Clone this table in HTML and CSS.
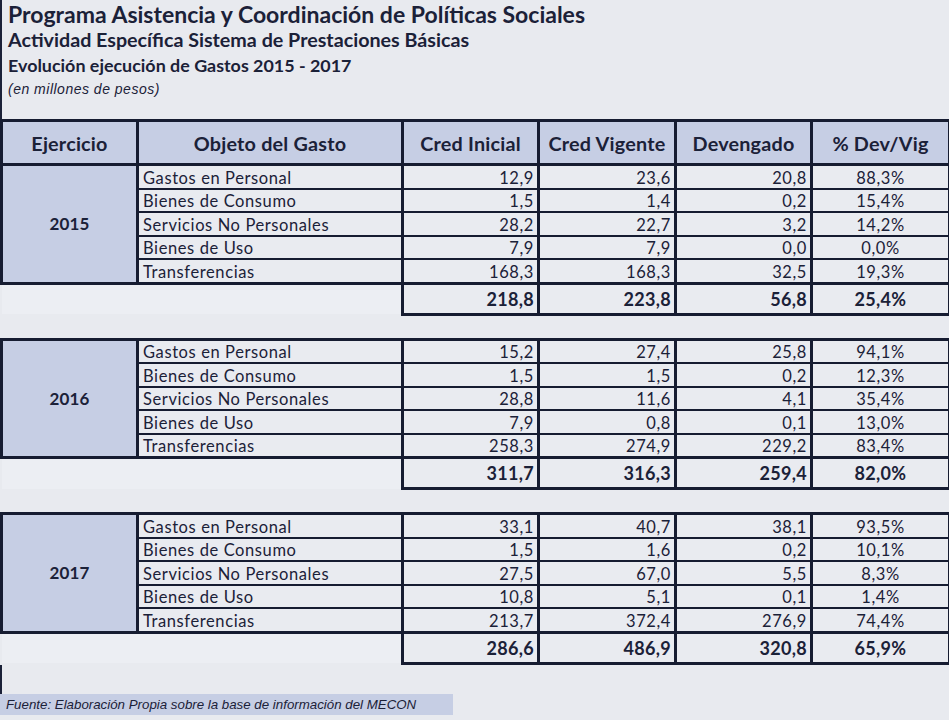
FILE: index.html
```html
<!DOCTYPE html>
<html lang="es">
<head>
<meta charset="utf-8">
<title>Programa Asistencia y Coordinación de Políticas Sociales</title>
<link rel="stylesheet" href="styles.css">
</head>
<body>
<div class="page">
  <header class="titles">
    <h1 class="t1">Programa Asistencia y Coordinación de Políticas Sociales</h1>
    <h2 class="t2">Actividad Específica Sistema de Prestaciones Básicas</h2>
    <h3 class="t3">Evolución ejecución de Gastos 2015 - 2017</h3>
    <p class="unit">(en millones de pesos)</p>
  </header>

  <table class="grid">
    <colgroup>
      <col class="c1"><col class="c2"><col class="c3"><col class="c4"><col class="c5"><col class="c6">
    </colgroup>
    <thead>
      <tr class="head">
        <th>Ejercicio</th><th>Objeto del Gasto</th><th>Cred Inicial</th><th>Cred Vigente</th><th>Devengado</th><th>% Dev/Vig</th>
      </tr>
    </thead>
    <tbody>
      <tr class="r first"><td class="year" rowspan="5">2015</td><td class="obj">Gastos en Personal</td><td class="num">12,9</td><td class="num">23,6</td><td class="num">20,8</td><td class="pct">88,3%</td></tr>
      <tr class="r"><td class="obj">Bienes de Consumo</td><td class="num">1,5</td><td class="num">1,4</td><td class="num">0,2</td><td class="pct">15,4%</td></tr>
      <tr class="r"><td class="obj">Servicios No Personales</td><td class="num">28,2</td><td class="num">22,7</td><td class="num">3,2</td><td class="pct">14,2%</td></tr>
      <tr class="r"><td class="obj">Bienes de Uso</td><td class="num">7,9</td><td class="num">7,9</td><td class="num">0,0</td><td class="pct">0,0%</td></tr>
      <tr class="r last"><td class="obj">Transferencias</td><td class="num">168,3</td><td class="num">168,3</td><td class="num">32,5</td><td class="pct">19,3%</td></tr>
      <tr class="tot"><td class="blank" colspan="2"></td><td class="num">218,8</td><td class="num">223,8</td><td class="num">56,8</td><td class="pct">25,4%</td></tr>
      <tr class="gap"><td colspan="6"></td></tr>

      <tr class="r first"><td class="year" rowspan="5">2016</td><td class="obj">Gastos en Personal</td><td class="num">15,2</td><td class="num">27,4</td><td class="num">25,8</td><td class="pct">94,1%</td></tr>
      <tr class="r"><td class="obj">Bienes de Consumo</td><td class="num">1,5</td><td class="num">1,5</td><td class="num">0,2</td><td class="pct">12,3%</td></tr>
      <tr class="r"><td class="obj">Servicios No Personales</td><td class="num">28,8</td><td class="num">11,6</td><td class="num">4,1</td><td class="pct">35,4%</td></tr>
      <tr class="r"><td class="obj">Bienes de Uso</td><td class="num">7,9</td><td class="num">0,8</td><td class="num">0,1</td><td class="pct">13,0%</td></tr>
      <tr class="r last"><td class="obj">Transferencias</td><td class="num">258,3</td><td class="num">274,9</td><td class="num">229,2</td><td class="pct">83,4%</td></tr>
      <tr class="tot"><td class="blank" colspan="2"></td><td class="num">311,7</td><td class="num">316,3</td><td class="num">259,4</td><td class="pct">82,0%</td></tr>
      <tr class="gap"><td colspan="6"></td></tr>

      <tr class="r first"><td class="year" rowspan="5">2017</td><td class="obj">Gastos en Personal</td><td class="num">33,1</td><td class="num">40,7</td><td class="num">38,1</td><td class="pct">93,5%</td></tr>
      <tr class="r"><td class="obj">Bienes de Consumo</td><td class="num">1,5</td><td class="num">1,6</td><td class="num">0,2</td><td class="pct">10,1%</td></tr>
      <tr class="r"><td class="obj">Servicios No Personales</td><td class="num">27,5</td><td class="num">67,0</td><td class="num">5,5</td><td class="pct">8,3%</td></tr>
      <tr class="r"><td class="obj">Bienes de Uso</td><td class="num">10,8</td><td class="num">5,1</td><td class="num">0,1</td><td class="pct">1,4%</td></tr>
      <tr class="r last"><td class="obj">Transferencias</td><td class="num">213,7</td><td class="num">372,4</td><td class="num">276,9</td><td class="pct">74,4%</td></tr>
      <tr class="tot"><td class="blank" colspan="2"></td><td class="num">286,6</td><td class="num">486,9</td><td class="num">320,8</td><td class="pct">65,9%</td></tr>
    </tbody>
  </table>

  <div class="tail"></div>
  <p class="source">Fuente: Elaboración Propia sobre la base de información del MECON</p>
</div>
</body>
</html>
```

FILE: styles.css
```css
html, body {
  margin: 0;
  padding: 0;
  background: #e8eaef;
}

.page {
  width: 949px;
  height: 720px;
  overflow: hidden;
  background: #e8eaef;
  color: #1b2138;
  font-family: Lato, "Open Sans", sans-serif;
}

.titles {
  height: 119px;
  box-sizing: border-box;
  border-left: 2px solid #1b2138;
  padding: 1px 0 0 6px;
}

.t1 {
  margin: 0;
  font-size: 23px;
  font-weight: 700;
  line-height: 27px;
}

.t2 {
  margin: 0;
  font-size: 19.7px;
  font-weight: 700;
  line-height: 24px;
}

.t3 {
  margin: 2px 0 0;
  font-size: 17.9px;
  font-weight: 700;
  line-height: 23px;
}

.unit {
  margin: 4px 0 0;
  font-family: "Liberation Sans", Arial, sans-serif;
  font-style: italic;
  font-size: 14px;
  letter-spacing: 0.5px;
  line-height: 17px;
}

.grid {
  width: 948px;
  table-layout: fixed;
  border-collapse: collapse;
  border-spacing: 0;
}

.c1 { width: 136px; }
.c2 { width: 265px; }
.c3 { width: 136px; }
.c4 { width: 137px; }
.c5 { width: 136px; }
.c6 { width: 138px; }

.grid th,
.grid td {
  padding: 0;
  border: 3px solid #161c31;
  background: #e9ebf0;
}

.head th {
  height: 41px;
  background: #c6cee4;
  font-size: 19.8px;
  font-weight: 700;
  text-align: center;
  vertical-align: middle;
  letter-spacing: 0.2px;
}

.r td {
  height: 21.5px;
  font-size: 16.5px;
  line-height: 19px;
  letter-spacing: 0.6px;
  vertical-align: bottom;
  border-top-width: 2px;
  border-bottom-width: 2px;
}

.r.first td { border-top-width: 3px; }
.r.last td { border-bottom-width: 3px; }

.grid td.year {
  background: #c6cee4;
  font-size: 17px;
  font-weight: 700;
  letter-spacing: 0.2px;
  text-align: center;
  vertical-align: middle;
  border-bottom-width: 3px;
}

.obj {
  padding-left: 4px !important;
  text-align: left;
}

.num {
  text-align: right;
  padding-right: 3px !important;
}

.pct {
  text-align: center;
}

.tot td {
  height: 28px;
  font-size: 18px;
  font-weight: 700;
  letter-spacing: 0.3px;
  vertical-align: middle;
}

.grid td.blank {
  background: #eceef3;
  border-bottom: none;
  border-left: none;
  border-right-width: 3px;
}

.gap td {
  height: 22px;
  border: none;
  background: #e8eaef;
}

.tail {
  height: 29px;
  border-left: 2px solid #1b2138;
}

.source {
  margin: 0;
  width: 447px;
  height: 21px;
  padding-left: 6px;
  background: #c6cee4;
  font-family: "Liberation Sans", Arial, sans-serif;
  font-style: italic;
  font-size: 13.3px;
  line-height: 21px;
  color: #1b2138;
}
```
